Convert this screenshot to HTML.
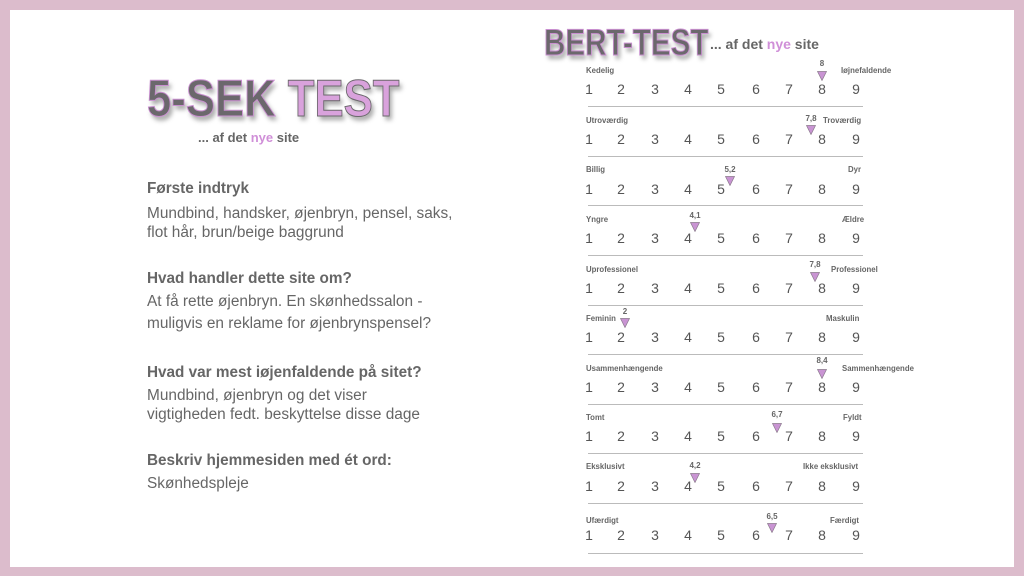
<!DOCTYPE html>
<html><head><meta charset="utf-8"><style>
*{margin:0;padding:0}
body{width:1024px;height:576px;background:#dcbccc;position:relative;overflow:hidden;font-family:"Liberation Sans",sans-serif}
.pg{position:absolute;left:10px;top:10px;width:1004px;height:557px;background:#fff}
.a{position:absolute;white-space:nowrap;line-height:18px}
.h{font-weight:bold;font-size:15.3px;color:#666}
.t{font-size:15.4px;color:#666}
.lb{font-size:7.8px;font-weight:bold;color:#666;line-height:10px}
.n{font-size:14px;color:#555;line-height:16px;width:20px;text-align:center}
.ln{position:absolute;left:588px;width:275px;height:1px;background:#bbb}
.v{font-size:8px;font-weight:bold;color:#666;line-height:10px;width:20px;text-align:center}
.big{font-weight:900;font-family:"Liberation Sans",sans-serif;-webkit-text-stroke:1px #c98fd0;text-shadow:3px 4px 5px rgba(0,0,0,.35);color:#6b686c;transform-origin:0 0}
.big span{color:#d9a2dc;-webkit-text-stroke:1px #6b686c}
</style></head><body><div class="pg"></div>
<div class="a big" style="left:147px;top:72px;font-size:52px;line-height:54px;transform:scaleX(0.84)">5-SEK <span>TEST</span></div>
<div class="a h" style="left:198px;top:129px;font-size:13px">... af det <span style="color:#d08fd8">nye</span> site</div>
<div class="a big" style="left:544px;top:24px;font-size:37px;line-height:38px;transform:scaleX(0.8)">BERT-TEST</div>
<div class="a h" style="left:710px;top:35px;font-size:14px">... af det <span style="color:#d08fd8">nye</span> site</div>

<div class="a h" style="left:147px;top:180px">Første indtryk</div>
<div class="a t" style="left:147px;top:205px">Mundbind, handsker, øjenbryn, pensel, saks,</div>
<div class="a t" style="left:147px;top:224px">flot hår, brun/beige baggrund</div>
<div class="a h" style="left:147px;top:270px">Hvad handler dette site om?</div>
<div class="a t" style="left:147px;top:293px">At få rette øjenbryn. En skønhedssalon -</div>
<div class="a t" style="left:147px;top:315px">muligvis en reklame for øjenbrynspensel?</div>
<div class="a h" style="left:147px;top:364px">Hvad var mest iøjenfaldende på sitet?</div>
<div class="a t" style="left:147px;top:387px">Mundbind, øjenbryn og det viser</div>
<div class="a t" style="left:147px;top:406px">vigtigheden fedt. beskyttelse disse dage</div>
<div class="a h" style="left:147px;top:452px">Beskriv hjemmesiden med ét ord:</div>
<div class="a t" style="left:147px;top:475px">Skønhedspleje</div>

<div id="rows"></div>
<script>
var rows=[
["Kedelig","Iøjnefaldende",841,71,"8",822,64,71],
["Utroværdig","Troværdig",823,121,"7,8",811,119,125],
["Billig","Dyr",848,170,"5,2",730,170,176],
["Yngre","Ældre",842,220,"4,1",695,216,222],
["Uprofessionel","Professionel",831,270,"7,8",815,265,272],
["Feminin","Maskulin",826,319,"2",625,312,318],
["Usammenhængende","Sammenhængende",842,369,"8,4",822,361,369],
["Tomt","Fyldt",843,418,"6,7",777,415,423],
["Eksklusivt","Ikke eksklusivt",803,467,"4,2",695,466,473],
["Ufærdigt","Færdigt",830,521,"6,5",772,517,523]];
var xs=[589,621,655,688,721,756,789,822,856],h="";
var nys=[89,139,189,238,288,337,387,436,486,535],ls=[106,156,205,255,305,354,404,453,503,553];
rows.forEach(function(r,i){
h+='<div class="a lb" style="left:586px;top:'+(r[3]-5)+'px">'+r[0]+'</div>';
h+='<div class="a lb" style="left:'+r[2]+'px;top:'+(r[3]-5)+'px">'+r[1]+'</div>';
xs.forEach(function(x,k){h+='<div class="a n" style="left:'+(x-10)+'px;top:'+(nys[i]-8)+'px">'+(k+1)+'</div>';});
h+='<div class="ln" style="top:'+ls[i]+'px"></div>';
h+='<div class="a v" style="left:'+(r[5]-10)+'px;top:'+(r[6]-5)+'px">'+r[4]+'</div>';
h+='<svg style="position:absolute;left:'+(r[5]-5)+'px;top:'+r[7]+'px" width="10" height="10"><polygon points="0.5,0.5 9.5,0.5 5,9.5" fill="#c994d3" stroke="#8a7a8c" stroke-width="0.7"/></svg>';
});
document.getElementById('rows').innerHTML=h;
</script>
</body></html>
